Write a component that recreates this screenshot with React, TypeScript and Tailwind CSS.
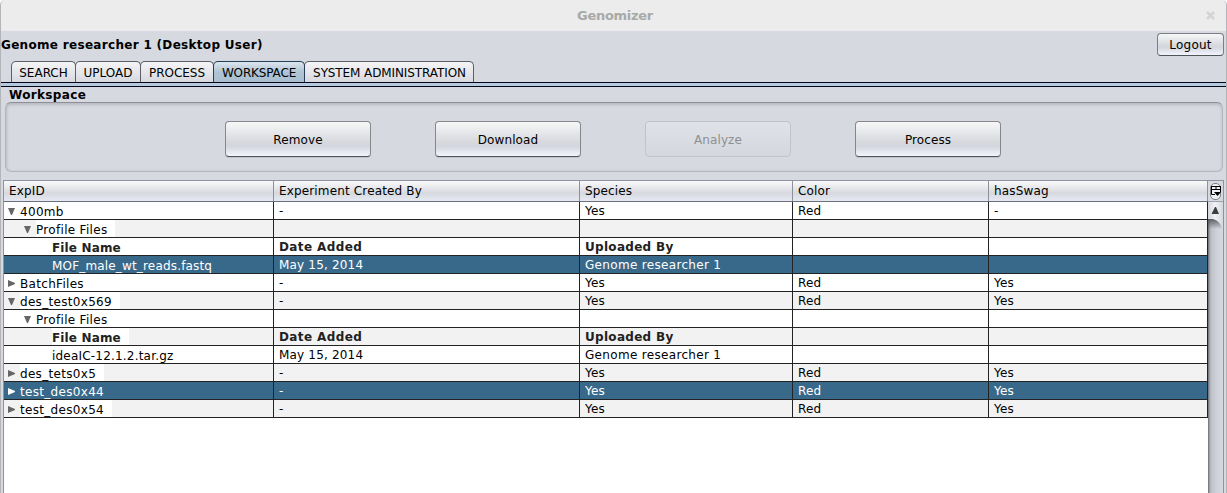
import React from "react";

type Row = {
  name: string;
  depth: number;
  open?: boolean;
  leaf?: boolean;
  bold?: boolean;
  selected?: boolean;
  tint?: boolean;
  labelWidth?: string;
  tracking?: string;
  cells: [string, string, string, string];
};

const rows: Row[] = [
  { name: "400mb", depth: 0, open: true, cells: ["-", "Yes", "Red", "-"] },
  { name: "Profile Files", depth: 1, open: true, tint: true, labelWidth: "w-[79px]", cells: ["", "", "", ""] },
  { name: "File Name", depth: 2, leaf: true, bold: true, tracking: "tracking-[0.15px]", cells: ["Date Added", "Uploaded By", "", ""] },
  { name: "MOF_male_wt_reads.fastq", depth: 2, leaf: true, selected: true, tracking: "tracking-[0.17px]", cells: ["May 15, 2014", "Genome researcher 1", "", ""] },
  { name: "BatchFiles", depth: 0, cells: ["-", "Yes", "Red", "Yes"] },
  { name: "des_test0x569", depth: 0, open: true, tint: true, labelWidth: "w-[100px]", cells: ["-", "Yes", "Red", "Yes"] },
  { name: "Profile Files", depth: 1, open: true, cells: ["", "", "", ""] },
  { name: "File Name", depth: 2, leaf: true, bold: true, tint: true, labelWidth: "w-[77px]", tracking: "tracking-[0.15px]", cells: ["Date Added", "Uploaded By", "", ""] },
  { name: "ideaIC-12.1.2.tar.gz", depth: 2, leaf: true, tracking: "tracking-[0.2px]", cells: ["May 15, 2014", "Genome researcher 1", "", ""] },
  { name: "des_tets0x5", depth: 0, tint: true, labelWidth: "w-[84px]", cells: ["-", "Yes", "Red", "Yes"] },
  { name: "test_des0x44", depth: 0, selected: true, cells: ["-", "Yes", "Red", "Yes"] },
  { name: "test_des0x54", depth: 0, tint: true, labelWidth: "w-[92px]", cells: ["-", "Yes", "Red", "Yes"] },
];

const cellTracking: Record<string, string> = {
  "Date Added": "tracking-[0.4px]",
  "Uploaded By": "tracking-[0.3px]",
  "May 15, 2014": "tracking-[0.18px]",
  "Genome researcher 1": "tracking-[0.32px]",
};

const grid = "grid grid-cols-[270px_306px_213px_196px_219px]";

function Arrow({ open, selected }: { open?: boolean; selected?: boolean }) {
  return (
    <svg width="7" height="7" viewBox="0 0 7 7" className={selected ? "fill-white" : "fill-[#666]"}>
      <path d={open ? "M0 0H7L4 7H3Z" : "M0 0L7 3V4L0 7Z"} />
    </svg>
  );
}

function TreeRow({ row }: { row: Row }) {
  const bg = row.selected ? "bg-[#39698a] text-white" : row.tint ? "bg-[#f2f2f2] text-black" : "bg-white text-black";
  const pad = row.depth === 0 ? "pl-1" : row.depth === 1 ? "pl-5" : "pl-12";
  const weight = row.bold ? "font-bold text-[#222]" : "";
  return (
    <div className={`${grid} h-[18px] grid-rows-[18px] ${bg}`}>
      <div className={`flex items-center border-r border-b border-[#232323] ${pad}`}>
        {!row.leaf && (
          <span className="flex w-3 shrink-0 pt-px">
            <Arrow open={row.open} selected={row.selected} />
          </span>
        )}
        <span
          className={`h-[17px] leading-[20px] whitespace-pre ${weight} ${row.tracking ?? "tracking-[0.31px]"} ${row.labelWidth ?? ""} ${
            row.labelWidth ? "bg-white" : ""
          }`}
        >
          {row.name}
        </span>
      </div>
      {row.cells.map((c, i) => (
        <div
          key={i}
          className={`border-r border-b border-[#232323] pl-[5px] leading-[19px] whitespace-pre ${weight} ${cellTracking[c] ?? "tracking-[0.2px]"}`}
        >
          {c}
        </div>
      ))}
    </div>
  );
}

function Tab({ label, width, active, tracking = "" }: { label: string; width: string; active?: boolean; tracking?: string }) {
  return (
    <div
      className={`-mr-px flex h-[21px] items-center justify-center rounded-t-[5px] border border-b-0 pt-[2px] whitespace-pre ${tracking} ${width} ${
        active
          ? "z-10 border-[#263f58] bg-linear-to-b from-[#dde7ef] via-[#afc3d3] to-[#a9bfd0]"
          : "border-[#5c5f68] bg-linear-to-b from-[#f5f5f7] to-[#d7d9df]"
      }`}
    >
      {label}
    </div>
  );
}

function ActionButton({ label, disabled }: { label: string; disabled?: boolean }) {
  return (
    <button
      disabled={disabled}
      className={`h-9 w-[146px] rounded-[4px] border pt-[2px] tracking-[0.1px] ${
        disabled
          ? "border-[#c0c3c9] bg-linear-to-b from-[#dfe2e6] to-[#d4d7df] text-[#8e8f91]"
          : "border-[#85878b] border-b-[#505358] bg-[linear-gradient(#f7f7f8,#d6d8dd_60%,#d4d7e0_72%,#f2f5fd)] shadow-[0_1px_0_#c0c3ca]"
      }`}
    >
      {label}
    </button>
  );
}

export default function App() {
  return (
    <div className="flex h-[493px] w-[1227px] flex-col overflow-hidden rounded-t-[5px] border-x border-[#b4b5b8] bg-[#d6d9df] font-['DejaVu_Sans',sans-serif] text-[12px] text-black">
      <header className="flex h-[31px] shrink-0 items-center bg-[#ececec] font-bold text-[#a8aaa8]">
        <span className="flex-1 pl-[3px] text-center text-[13px] tracking-[-0.3px]">Genomizer</span>
        <svg width="9" height="9" viewBox="0 0 9 9" className="-ml-5 mr-[11px] stroke-[#d4d4d4]">
          <path d="M1 1L8 8M8 1L1 8" strokeWidth="2.6" />
        </svg>
      </header>

      <div className="flex h-[30px] shrink-0 items-start justify-between pt-[2px] pr-[2px]">
        <span className="pt-[3px] font-bold tracking-[0.31px]">Genome researcher 1 (Desktop User)</span>
        <button className="h-[23px] w-[67px] rounded-[4px] border border-[#7b7e83] border-b-[#505358] bg-[linear-gradient(#f7f7f8,#d6d8dd_55%,#d4d7e0_65%,#f2f5fd)] tracking-[0.2px]">
          Logout
        </button>
      </div>

      <nav className="flex h-[21px] shrink-0 pl-[10px]">
        <Tab label="SEARCH" width="w-[65px]" />
        <Tab label="UPLOAD" width="w-[66px]" />
        <Tab label="PROCESS" width="w-[74px]" />
        <Tab label="WORKSPACE" width="w-[92px]" active tracking="tracking-[-0.15px]" />
        <Tab label="SYSTEM ADMINISTRATION" width="w-[170px]" tracking="tracking-[-0.1px] pl-px" />
      </nav>
      <div className="h-[5px] shrink-0 border-y border-[#05051a] bg-[#b5cade]" />

      <section className="flex flex-1 flex-col">
        <h2 className="h-[15px] pl-2 leading-[16px] font-bold tracking-[0.35px]">Workspace</h2>
        <div className="mr-[3px] ml-[4px] flex h-[70px] items-center gap-16 rounded-[6px] border border-[#b4b7bd] border-t-[#8c8f95] pt-1 pl-[219px] shadow-[inset_0_2px_3px_#b9bcc2,inset_1px_0_2px_#bfc2c8]">
          <ActionButton label="Remove" />
          <ActionButton label="Download" />
          <ActionButton label="Analyze" disabled />
          <ActionButton label="Process" />
        </div>

        <div className="mt-2 mr-[2px] ml-[2px] flex flex-1 border border-b-0 border-[#8e939f] bg-white">
          <div className="w-[1204px]">
            <div className={`${grid} h-[21px] grid-rows-[20px] border-b border-[#6c6f7c] bg-[linear-gradient(#fafafb,#dedfe4_50%,#d7d9df_60%,#e6e9f3)]`}>
              {["ExpID", "Experiment Created By", "Species", "Color", "hasSwag"].map((h) => (
                <div key={h} className="border-r border-[#8e9199] pl-[5px] leading-[21px] tracking-[0.15px] whitespace-pre">
                  {h}
                </div>
              ))}
            </div>
            {rows.map((r, i) => (
              <TreeRow key={i} row={r} />
            ))}
          </div>
          <div className="flex flex-1 flex-col bg-[linear-gradient(90deg,#66696f,#94979d_8%,#bec1c8_20%,#cfd2d8_60%,#d6d9df)]">
            <div className="h-[21px] border-b border-[#9da1aa] bg-[#d6d9df] pt-px pl-px">
              <svg width="13" height="19" viewBox="0 0 13 19">
                <rect x="1.5" y="1.5" width="10" height="16" rx="4.5" fill="#eff0f3" stroke="#7b7e85" />
                <path d="M2 4.500H12M2.500 4V12.500H6M11.500 4V10M2 7.500H12M7 4V8" fill="none" stroke="#000" />
                <path d="M5 10H12L8.500 14Z" />
              </svg>
            </div>
            <svg width="14" height="27" viewBox="0 0 14 27">
              <defs>
                <linearGradient id="track-edge" x1="0" y1="0" x2="0" y2="1">
                  <stop offset="0" stopColor="#54575d" />
                  <stop offset="1" stopColor="#54575d" stopOpacity="0" />
                </linearGradient>
                <linearGradient id="arrow-face" x1="0" y1="0" x2="1" y2="0">
                  <stop offset="0" stopColor="#d4d7dc" />
                  <stop offset=".5" stopColor="#f0f2f5" />
                  <stop offset="1" stopColor="#d9dce1" />
                </linearGradient>
              </defs>
              <path d="M0 16H5Q12 18 14 26V27H0Z" fill="url(#track-edge)" />
              <path d="M0 0H14V26Q12 19 5 17H0Z" fill="url(#arrow-face)" />
              <path d="M3.500 12L7 5H8L11 12Z" fill="#3c3e42" />
            </svg>
          </div>
        </div>
      </section>
    </div>
  );
}
